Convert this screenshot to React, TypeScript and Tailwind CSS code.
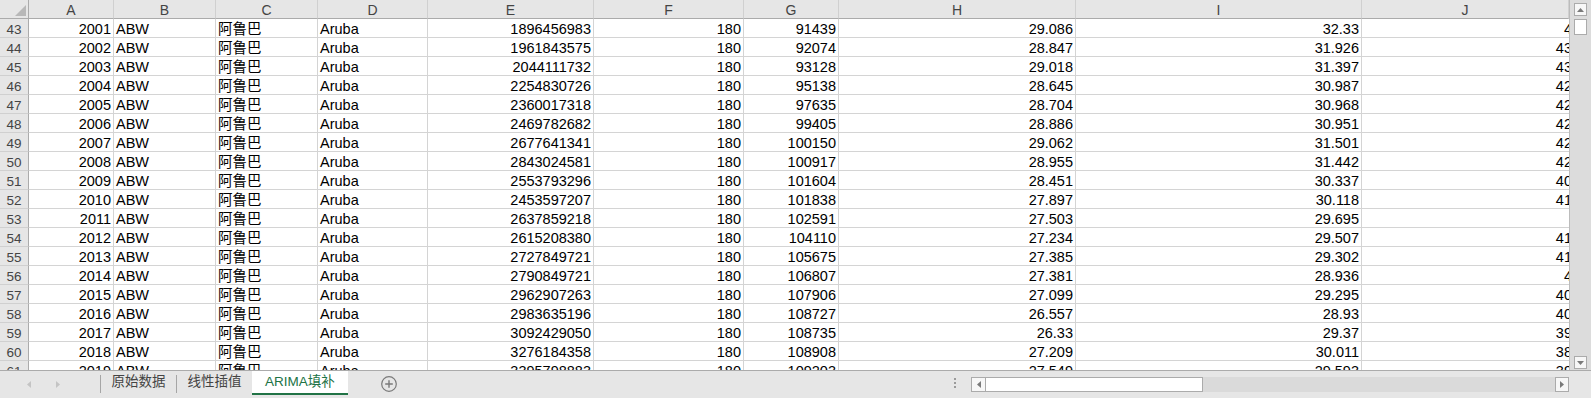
import React from "react";

/* =========================
   DATA
========================= */
type Row = {
  n: number;
  year: string;
  code: string;
  zh: string;
  en: string;
  e: string;
  f: string;
  g: string;
  h: string;
  i: string;
  j: string;
};

const raw: [number, string, string, string, string, string, string, string][] = [
  [43, "2001", "1896456983", "91439", "29.086", "32.33", "4"],
  [44, "2002", "1961843575", "92074", "28.847", "31.926", "43"],
  [45, "2003", "2044111732", "93128", "29.018", "31.397", "43"],
  [46, "2004", "2254830726", "95138", "28.645", "30.987", "42"],
  [47, "2005", "2360017318", "97635", "28.704", "30.968", "42"],
  [48, "2006", "2469782682", "99405", "28.886", "30.951", "42"],
  [49, "2007", "2677641341", "100150", "29.062", "31.501", "42"],
  [50, "2008", "2843024581", "100917", "28.955", "31.442", "42"],
  [51, "2009", "2553793296", "101604", "28.451", "30.337", "40"],
  [52, "2010", "2453597207", "101838", "27.897", "30.118", "41"],
  [53, "2011", "2637859218", "102591", "27.503", "29.695", ""],
  [54, "2012", "2615208380", "104110", "27.234", "29.507", "41"],
  [55, "2013", "2727849721", "105675", "27.385", "29.302", "41"],
  [56, "2014", "2790849721", "106807", "27.381", "28.936", "4"],
  [57, "2015", "2962907263", "107906", "27.099", "29.295", "40"],
  [58, "2016", "2983635196", "108727", "26.557", "28.93", "40"],
  [59, "2017", "3092429050", "108735", "26.33", "29.37", "39"],
  [60, "2018", "3276184358", "108908", "27.209", "30.011", "38"],
  [61, "2019", "3395798883", "109203", "27.549", "29.593", "39"],
].map((r) => r as unknown as [number, string, string, string, string, string, string, string]);

const rows: Row[] = raw.map((r) => ({
  n: r[0],
  year: r[1],
  code: "ABW",
  zh: "阿鲁巴",
  en: "Aruba",
  e: r[2],
  f: "180",
  g: r[3],
  h: r[4],
  i: r[5],
  j: r[6],
}));

const letters = ["A", "B", "C", "D", "E", "F", "G", "H", "I", "J"];

const gridCols =
  "grid grid-cols-[29px_85px_102px_102px_110px_166px_150px_95px_237px_286px_207px]";

const font = {
  fontFamily: '"Liberation Sans", "Noto Sans CJK SC", Arial, sans-serif',
};

const cell =
  "h-[19px] border-r border-b border-[#d4d4d4] overflow-hidden whitespace-nowrap pt-[1px] leading-[19px] text-[14.5px] text-black";

/* =========================
   SMALL PARTS
========================= */
function Corner() {
  return (
    <div className="h-[19px] bg-[#e6e6e6] border-r border-b border-[#ababab]">
      <svg width="28" height="18" viewBox="0 0 28 18">
        <polygon points="26,5 26,16 15,16" fill="#b8b8b8" />
      </svg>
    </div>
  );
}

function Arrow({ dir, color = "#7a7a7a" }: { dir: "up" | "down" | "left" | "right"; color?: string }) {
  const pts = {
    up: "0,4 3.5,0 7,4",
    down: "0,0 3.5,4 7,0",
    left: "4,0 0,3.5 4,7",
    right: "0,0 4,3.5 0,7",
  }[dir];
  const vertical = dir === "up" || dir === "down";
  return (
    <svg width={vertical ? 7 : 4} height={vertical ? 4 : 7} viewBox={vertical ? "0 0 7 4" : "0 0 4 7"}>
      <polygon points={pts} fill={color} />
    </svg>
  );
}

/* =========================
   SHEET
========================= */
function Sheet() {
  return (
    <div className="w-[1569px] h-[370px] overflow-hidden bg-white" style={font}>
      {/* column header */}
      <div className={gridCols}>
        <Corner />
        {letters.map((l) => (
          <div
            key={l}
            className="h-[19px] bg-[#e6e6e6] border-r border-b border-r-[#d0d0d0] border-b-[#ababab] text-center text-[14px] leading-[18px] pt-[1px] text-[#444]"
          >
            {l}
          </div>
        ))}
      </div>

      {/* body */}
      {rows.map((r) => (
        <div key={r.n} className={gridCols}>
          <div className="h-[19px] bg-[#e6e6e6] border-r border-b border-r-[#ababab] border-b-[#d0d0d0] text-center text-[13.5px] leading-[19px] pt-[1px] text-[#444]">
            {r.n}
          </div>
          <div className={`${cell} text-right pr-[2px]`}>{r.year}</div>
          <div className={`${cell} pl-[2px]`}>{r.code}</div>
          <div className={`${cell} pl-[2px]`}>{r.zh}</div>
          <div className={`${cell} pl-[2px]`}>{r.en}</div>
          <div className={`${cell} text-right pr-[2px]`}>{r.e}</div>
          <div className={`${cell} text-right pr-[2px]`}>{r.f}</div>
          <div className={`${cell} text-right pr-[2px]`}>{r.g}</div>
          <div className={`${cell} text-right pr-[2px]`}>{r.h}</div>
          <div className={`${cell} text-right pr-[2px]`}>{r.i}</div>
          <div className={`${cell} border-r-0 flex justify-end`}>
            <span className="mr-[-3px]">{r.j}</span>
          </div>
        </div>
      ))}
    </div>
  );
}

function VScroll() {
  return (
    <div className="w-[22px] h-[370px] bg-[#dcdcdc] border-l border-[#bcbcbc] pl-[4px] flex flex-col">
      <div className="mt-[3px] w-[13px] h-[13px] bg-[#f7f7f7] border border-[#ababab] flex items-center justify-center">
        <Arrow dir="up" />
      </div>
      <div className="mt-[3px] w-[13px] h-[16px] bg-white border border-[#ababab]" />
      <div className="flex-1" />
      <div className="mb-[1px] w-[13px] h-[13px] bg-[#f7f7f7] border border-[#ababab] flex items-center justify-center">
        <Arrow dir="down" />
      </div>
    </div>
  );
}

/* =========================
   TAB BAR
========================= */
function TabBar() {
  return (
    <div
      className="h-[28px] border-t border-[#ababab] bg-[#e6e6e6] flex items-start text-[13.5px] text-[#444]"
      style={font}
    >
      {/* nav arrows */}
      <div className="w-[100px] h-[27px] flex items-center">
        <div className="ml-[27px]">
          <Arrow dir="left" color="#c4c4c4" />
        </div>
        <div className="ml-[25px]">
          <Arrow dir="right" color="#c4c4c4" />
        </div>
      </div>
      <div className="w-px h-[18px] mt-[4px] bg-[#a6a6a6]" />
      <div className="w-[75px] h-[22px] flex items-center justify-center leading-none">原始数据</div>
      <div className="w-px h-[18px] mt-[4px] bg-[#a6a6a6]" />
      <div className="w-[75px] h-[22px] flex items-center justify-center leading-none">线性插值</div>
      <div className="w-[96px] h-[24px] bg-white border-b-2 border-[#217346] flex items-center justify-center text-[#217346] leading-none">
        ARIMA填补
      </div>
      <div className="ml-[33px] mt-[5px] w-[16px] h-[16px]">
        <svg width="16" height="16" viewBox="0 0 16 16">
          <circle cx="8" cy="8" r="7.3" fill="none" stroke="#7a7a7a" strokeWidth="1.2" />
          <path d="M8 4.2v7.6M4.2 8h7.6" stroke="#7a7a7a" strokeWidth="1.4" />
        </svg>
      </div>
      <div className="flex-1" />
      {/* splitter dots */}
      <div className="mt-[7px] flex flex-col gap-[2px]">
        <div className="w-[2px] h-[2px] bg-[#9a9a9a]" />
        <div className="w-[2px] h-[2px] bg-[#9a9a9a]" />
        <div className="w-[2px] h-[2px] bg-[#9a9a9a]" />
      </div>
      {/* horizontal scroll */}
      <div className="ml-[15px] mt-[6px] w-[598px] h-[15px] bg-[#dadada] flex">
        <div className="w-[15px] h-[15px] bg-[#f7f7f7] border border-[#ababab] flex items-center justify-center">
          <Arrow dir="left" />
        </div>
        <div className="w-[217px] h-[15px] bg-white border border-l-0 border-[#ababab]" />
        <div className="flex-1" />
        <div className="w-[14px] h-[15px] bg-[#f7f7f7] border border-[#ababab] flex items-center justify-center">
          <Arrow dir="right" />
        </div>
      </div>
      <div className="w-[22px]" />
    </div>
  );
}

export default function App() {
  return (
    <div className="w-[1591px] h-[398px] overflow-hidden bg-[#e6e6e6]">
      <div className="flex">
        <Sheet />
        <VScroll />
      </div>
      <TabBar />
    </div>
  );
}
